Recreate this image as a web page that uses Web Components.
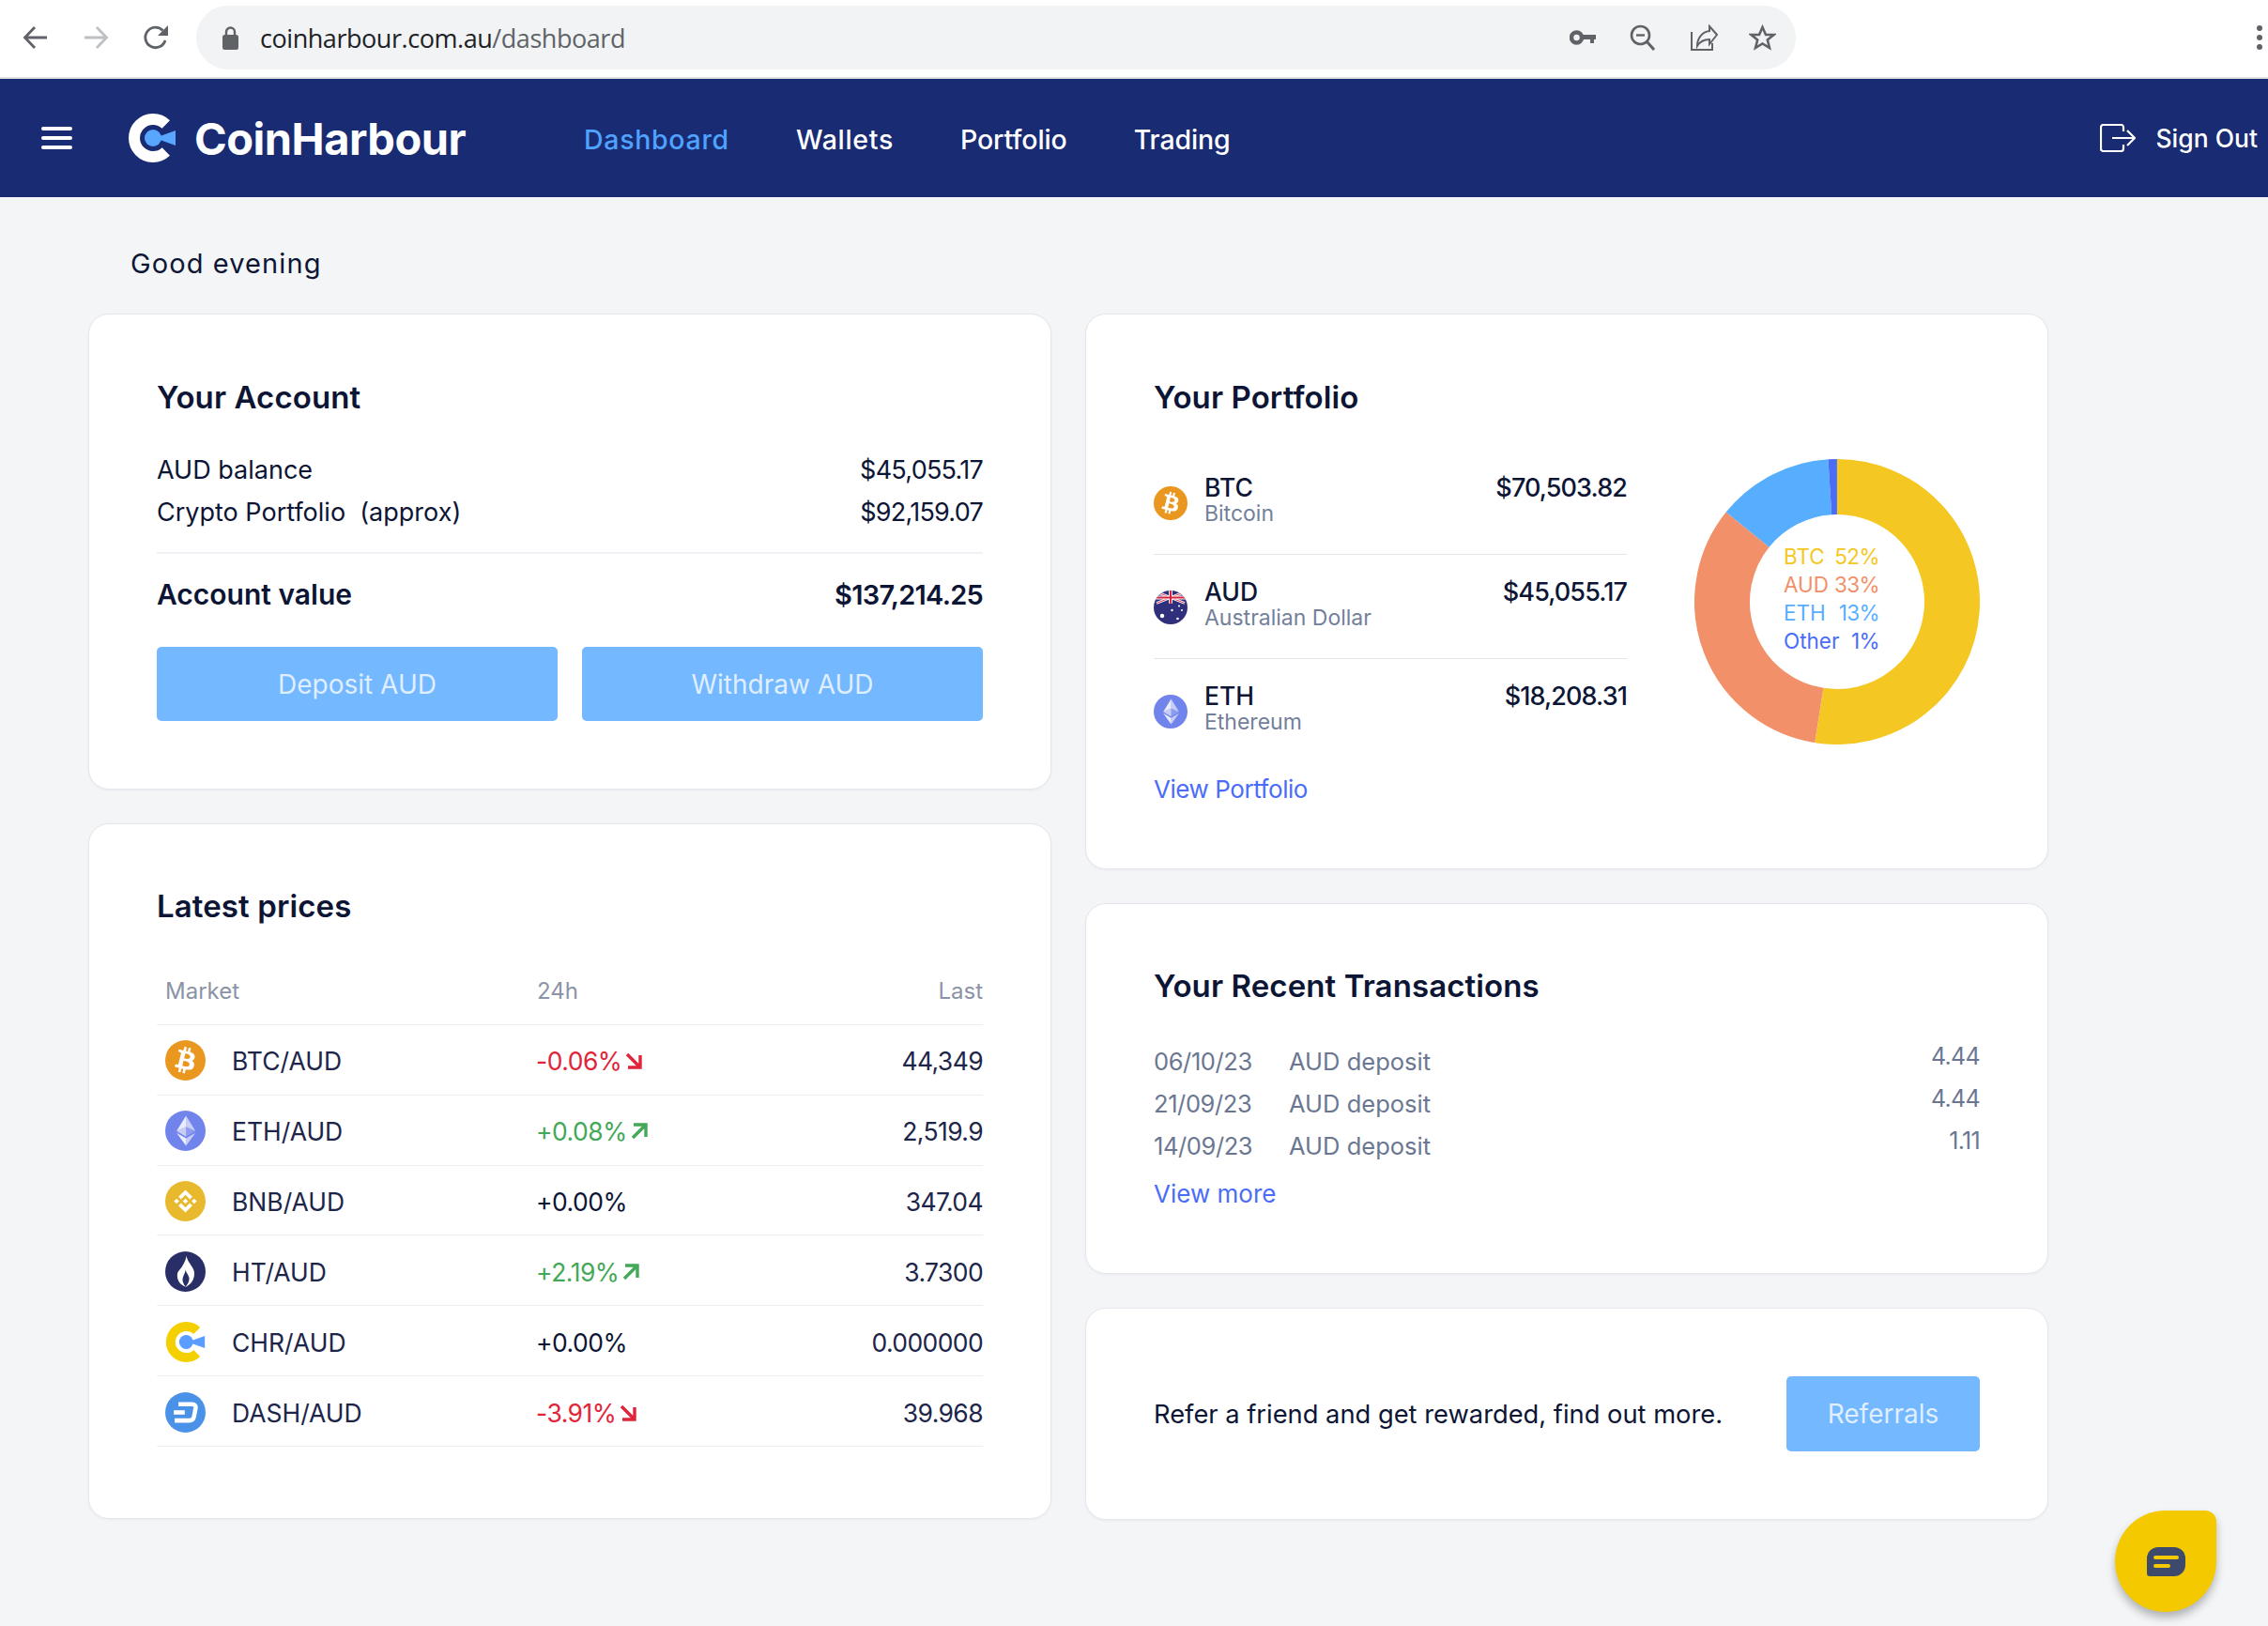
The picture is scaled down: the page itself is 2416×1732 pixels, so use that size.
<!DOCTYPE html>
<html lang="en">
<head>
<meta charset="utf-8">
<title>CoinHarbour dashboard</title>
<style>
   html, body { margin: 0; background: #f4f5f7; }
   body { font-family: Inter, "Noto Sans", sans-serif; color: #0d1535; height: 1732px; overflow: hidden; }
</style>
</head>
<body>
   <browser-bar url-host="coinharbour.com.au" url-path="/dashboard"></browser-bar>
   <site-nav></site-nav>
   <dash-board></dash-board>
   <chat-bubble></chat-bubble>

<script>
// logos shared by the nav and the table
const cMark = (ring, dot) => /*html*/`
   <svg viewBox="0 0 50 52" width="100%" height="100%" aria-hidden="true">
      <path d="M39.800 11.500A20 20 0 1 0 39.800 40.500" fill="none" stroke="${ring}" stroke-width="12"/>
      <circle cx="26" cy="26" r="9" fill="${dot}"/>
      <path d="M28 26 50 18V34Z" fill="${dot}"/>
   </svg>`

const COINS = {
   btc: `<circle cx="12" cy="12" r="12" fill="#e9971f"/>
      <g transform="translate(12 12) scale(1.05) translate(-12 -12)"><path fill="#fff" fill-rule="evenodd" d="M17.288 10.291c.24-1.59-.974-2.45-2.64-3.03l.54-2.153-1.315-.33-.525 2.107c-.345-.087-.705-.167-1.064-.25l.526-2.127-1.32-.33-.54 2.165c-.285-.067-.565-.132-.84-.2l-1.815-.45-.35 1.407s.975.225.955.236c.535.136.63.486.615.766l-1.477 5.92c-.075.166-.24.406-.614.314.015.02-.96-.24-.96-.24l-.66 1.51 1.71.426.93.242-.54 2.19 1.32.327.54-2.17c.36.1.705.19 1.05.273l-.51 2.154 1.32.33.545-2.19c2.24.427 3.93.257 4.64-1.774.57-1.637-.03-2.58-1.217-3.196.854-.193 1.5-.76 1.68-1.93h.01zm-3.01 4.22c-.404 1.64-3.157.75-4.05.53l.72-2.9c.896.23 3.757.67 3.33 2.37zm.41-4.24c-.37 1.49-2.662.735-3.405.55l.654-2.64c.744.18 3.137.52 2.75 2.084v.006z"/></g>`,
   eth: `<g transform="scale(.75)"><circle cx="16" cy="16" r="16" fill="#7184ec"/>
      <g fill="#fff"><path fill-opacity=".6" d="M16.498 4v8.87l7.497 3.35z"/><path fill-opacity=".85" d="M16.498 4 9 16.22l7.498-3.35z"/><path fill-opacity=".6" d="M16.498 21.968v6.027L24 17.616z"/><path fill-opacity=".85" d="M16.498 27.995v-6.028L9 17.616z"/><path fill-opacity=".2" d="m16.498 20.573 7.497-4.353-7.497-3.348z"/><path fill-opacity=".6" d="m9 16.22 7.498 4.353v-7.701z"/></g></g>`,
   bnb: `<g transform="scale(.75)"><circle cx="16" cy="16" r="16" fill="#e8b92c"/>
      <g transform="translate(16 16) scale(.9) translate(-16 -16)"><path fill="#fff" d="M12.116 14.404 16 10.52l3.886 3.886 2.26-2.26L16 6l-6.144 6.144zM6 16l2.26-2.26L10.52 16l-2.26 2.26zm6.116 1.596L16 21.48l3.886-3.886 2.26 2.259L16 26l-6.144-6.144-.003-.003zM21.48 16l2.26-2.26L26 16l-2.26 2.26zm-3.188-.002L16 18.294 13.705 16 16 13.706z"/></g></g>`,
   ht: `<g transform="scale(.75)"><circle cx="16" cy="16" r="16" fill="#2a2e66"/>
      <path fill="#fff" d="M16.800 3.500C17.600 8.500 21.600 11 22.800 15.500 24 21 21 26 16.600 28 12 27 9 22.500 9.600 18 10 15.400 12.400 14 13.600 11.600 14.800 9.300 16.400 6.800 16.800 3.500Z"/>
      <path fill="#2a2e66" d="M16.200 14.500C16.700 17.800 19.400 19 19 22.400 18.700 24.800 17.400 26.800 16.200 28 14.400 25.800 13.300 23.500 13.900 21 14.400 18.800 15.900 17.200 16.200 14.500Z"/></g>`,
   dash: `<g transform="scale(.75)"><circle cx="16" cy="16" r="16" fill="#4a91e8"/>
      <path d="M10.500 9.500H21.500C23.400 9.500 24.400 10.800 24.100 12.600L22.800 19.400C22.400 21.300 21 22.400 19.100 22.400H7.500" fill="none" stroke="#fff" stroke-width="3.400"/>
      <path d="M6.800 16H15.500" fill="none" stroke="#fff" stroke-width="3.400"/></g>`,
   aud: `<defs><clipPath id="disc"><circle cx="12" cy="12" r="12"/></clipPath></defs>
      <g clip-path="url(#disc)"><rect width="24" height="24" fill="#2f2f7c"/>
         <path d="M2 1 22 9M22 1 2 9" stroke="#fff" stroke-width="1.800"/>
         <path d="M2 1 22 9M22 1 2 9" stroke="#d6243c" stroke-width=".6"/>
         <path d="M12 0V9.200M0 5H24" stroke="#fff" stroke-width="2.600"/>
         <path d="M12 0V9.200M0 5H24" stroke="#d6243c" stroke-width="1.300"/>
         <g fill="#fff"><circle cx="6" cy="18" r="1.500"/><circle cx="13" cy="14" r=".8"/><circle cx="18" cy="11" r=".7"/><circle cx="20" cy="14" r=".7"/><circle cx="17" cy="20" r=".9"/></g>
      </g>`
}

class BrowserBar extends HTMLElement {

   constructor() {
      super()
      this.attachShadow({ mode: 'open' })
   }

   getStyles() {
      return /*html*/`
         <style>
            :host{ display:flex; align-items:center; box-sizing:content-box; height:80px; padding-bottom:2px; background:#fff; border-bottom:2px solid #dfe1e0; }
            svg{ display:block; flex:none; }
            .nav{ margin-left:24px; display:flex; gap:36px; width:185px; }
            .pill{ width:1704px; height:68px; background:#f1f3f4; border-radius:34px; display:flex; align-items:center; box-sizing:border-box; padding-left:28px; }
            .url{ margin-left:23px; font:27px "Open Sans", sans-serif; letter-spacing:-.45px; color:#202124; white-space:nowrap; }
            .url span{ color:#5f6368; }
            .tools{ margin-left:auto; margin-right:21px; display:flex; align-items:center; gap:36px; }
            .star{ margin-left:-3px; }
            .dots{ margin-left:auto; margin-right:6px; }
         </style>`
   }

   connectedCallback() {
      const host = this.getAttribute('url-host')
      const path = this.getAttribute('url-path')
      this.shadowRoot.innerHTML = /*html*/`
         ${this.getStyles()}
         <div class="nav">
            <svg width="28" height="28" viewBox="0 0 28 28" fill="none" stroke="#5f6368" stroke-width="2.800"><path d="M26 14H3M13 3 2.500 14 13 25"/></svg>
            <svg width="28" height="28" viewBox="0 0 28 28" fill="none" stroke="#bdc0c4" stroke-width="2.800"><path d="M2 14H25M15 3 25.500 14 15 25"/></svg>
            <svg width="28" height="28" viewBox="0 0 28 28" fill="none"><path d="M24 17A10.800 10.800 0 1 1 21.500 6.500" stroke="#5f6368" stroke-width="2.800"/><path d="M27 1V12H16Z" fill="#5f6368"/></svg>
         </div>
         <div class="pill">
            <svg width="17" height="27" viewBox="0 0 17 27"><path d="M4 12V7a4.500 4.500 0 0 1 9 0V12" fill="none" stroke="#5f6368" stroke-width="2.400"/><rect x="0" y="10" width="17" height="16" rx="2.500" fill="#5f6368"/></svg>
            <div class="url">${host}<span>${path}</span></div>
            <div class="tools">
               <svg width="28" height="18" viewBox="0 0 28 18"><circle cx="7.500" cy="9" r="5.500" fill="none" stroke="#5f6368" stroke-width="4.500"/><path d="M13 6H28V11H26V15H22V11H13Z" fill="#5f6368"/></svg>
               <svg width="28" height="28" viewBox="0 0 28 28" fill="none" stroke="#5f6368"><circle cx="11.500" cy="11.500" r="9.500" stroke-width="2.600"/><path d="M7 11.500H16" stroke-width="2.400"/><path d="M18.500 18.500 26 27" stroke-width="3"/></svg>
               <svg width="30" height="28" viewBox="0 0 30 28" fill="none" stroke="#5f6368" stroke-width="2"><path d="M2 8V27H24V20"/><path d="M21 2 29 11 21 21V16C15 16 11 18 8 23 8 15 13 8 21 7Z"/></svg>
               <svg class="star" width="29" height="28" viewBox="0 0 29 28" fill="none" stroke="#5f6368" stroke-width="2.600"><path d="M14.500 3 18 11H26.500L19.800 16.500 22 25 14.500 20.500 7 25 9.200 16.500 2.500 11H11Z"/></svg>
            </div>
         </div>
         <svg class="dots" width="6" height="28" viewBox="0 0 6 28" fill="#5f6368"><circle cx="3" cy="4" r="3"/><circle cx="3" cy="14" r="3"/><circle cx="3" cy="24" r="3"/></svg>
      `
   }
}

class SiteNav extends HTMLElement {

   constructor() {
      super()
      this.attachShadow({ mode: 'open' })
   }

   connectedCallback() {
      this.shadowRoot.innerHTML = /*html*/`
         <style>
            :host{ display:flex; align-items:center; height:126px; background:#182b73; color:#fff; }
            .burger{ margin-left:44px; width:33px; display:flex; flex-direction:column; gap:6px; }
            .burger i{ display:block; height:4px; border-radius:2px; background:#fff; }
            .logo{ margin-left:60px; display:flex; align-items:center; width:360px; }
            .mark{ width:50px; height:52px; flex:none; }
            .word{ margin-left:20px; font:700 47px Inter, sans-serif; letter-spacing:-.5px; white-space:nowrap; }
            .links{ margin-left:125px; padding-top:3px; display:flex; font:500 28.500px Inter, sans-serif; letter-spacing:.7px; }
            .links a{ color:#fff; text-decoration:none; margin-right:71px; white-space:nowrap; }
            .links a.on{ color:#4fa3ff; }
            .links a.tight{ letter-spacing:-.1px; }
            .out{ margin-left:auto; margin-right:11px; display:flex; align-items:center; gap:22px; font:500 26.500px Inter, sans-serif; }
         </style>
         <div class="burger"><i></i><i></i><i></i></div>
         <div class="logo"><div class="mark">${cMark('#fff', '#58a6ff')}</div><div class="word">CoinHarbour</div></div>
         <div class="links"><a class="on" href="#">Dashboard</a><a href="#">Wallets</a><a class="tight" href="#">Portfolio</a><a class="tight" href="#">Trading</a></div>
         <div class="out">
            <svg width="38" height="30" viewBox="0 0 38 30" fill="none" stroke="#fff" stroke-width="2.200"><path d="M25 8V3.500A2.500 2.500 0 0 0 22.500 1H3.500A2.500 2.500 0 0 0 1 3.500V26.500A2.500 2.500 0 0 0 3.500 29H22.500A2.500 2.500 0 0 0 25 26.500V22"/><path d="M13 15H36M29 7 37 15 29 23"/></svg>
            <span>Sign Out</span>
         </div>
      `
   }
}

class CoinIcon extends HTMLElement {

   constructor() {
      super()
      this.attachShadow({ mode: 'open' })
   }

   connectedCallback() {
      const name = this.getAttribute('name')
      const inner = name === 'chr'
         ? cMark('#f5d000', '#5a9cff')
         : `<svg viewBox="0 0 24 24" width="100%" height="100%" aria-hidden="true">${COINS[name]}</svg>`
      this.shadowRoot.innerHTML = /*html*/`
         <style>
            :host{ display:block; flex:none; width:var(--coin-size,36px); height:var(--coin-size,36px); }
            svg{ display:block; }
         </style>
         ${inner}`
   }
}

class DashCard extends HTMLElement {

   constructor() {
      super()
      this.attachShadow({ mode: 'open' })
   }

   connectedCallback() {
      const title = this.getAttribute('heading')
      this.shadowRoot.innerHTML = /*html*/`
         <style>
            :host{ display:block; box-sizing:border-box; background:#fff; border-radius:22px; border:1px solid #e6e7ec; box-shadow:0 1px 3px rgba(20,30,70,.05); padding:72px 72px 0; }
            h2{ margin:0; font:600 33px/32px Inter, sans-serif; color:#0d1535; letter-spacing:.1px; }
         </style>
         ${title ? `<h2>${title}</h2>` : ''}
         <slot></slot>`
   }
}

class KeyRow extends HTMLElement {

   constructor() {
      super()
      this.attachShadow({ mode: 'open' })
   }

   connectedCallback() {
      this.shadowRoot.innerHTML = /*html*/`
         <style>
            :host{ display:flex; justify-content:space-between; align-items:center; height:45px; font-size:27px; white-space:pre; }
            .val{ letter-spacing:-.75px; }
            :host([strong]){ height:46px; font-weight:600; font-size:30px; }
            :host([strong]) .val{ font-size:29px; letter-spacing:-.75px; }
         </style>
         <span><slot name="label"></slot></span><span class="val"><slot name="value"></slot></span>`
   }
}

class FlatButton extends HTMLElement {

   constructor() {
      super()
      this.attachShadow({ mode: 'open' })
   }

   connectedCallback() {
      this.shadowRoot.innerHTML = /*html*/`
         <style>
            :host{ display:flex; align-items:center; justify-content:center; height:79px; background:#74b8ff; border-radius:5px; color:rgba(255,255,255,.78); font-size:28px; font-weight:400; }
         </style>
         <slot></slot>`
   }
}

class HoldingRow extends HTMLElement {

   constructor() {
      super()
      this.attachShadow({ mode: 'open' })
   }

   connectedCallback() {
      this.shadowRoot.innerHTML = /*html*/`
         <style>
            :host{ display:grid; grid-template-columns:36px 1fr auto; column-gap:18px; height:110px; border-bottom:1px solid #e3e4e8; }
            :host([last]){ border-bottom:0; }
            coin-icon{ margin-top:38px; }
            .txt{ padding-top:24px; }
            .sym{ font:500 26.500px/30px Inter, sans-serif; }
            .sub{ font:400 23px/27px Inter, sans-serif; color:#737f9a; }
            .amt{ padding-top:25px; font:500 27px/30px Inter, sans-serif; letter-spacing:-.9px; }
         </style>
         <coin-icon name="${this.getAttribute('coin')}"></coin-icon>
         <div class="txt"><div class="sym"><slot name="sym"></slot></div><div class="sub"><slot name="sub"></slot></div></div>
         <div class="amt"><slot name="amt"></slot></div>`
   }
}

class DonutChart extends HTMLElement {

   constructor() {
      super()
      this.attachShadow({ mode: 'open' })
   }

   arc(from, to, color) {
      const r = 122.500, c = 152
      const pt = f => {
         const a = f * 2 * Math.PI
         return (c + r * Math.sin(a)).toFixed(2) + ' ' + (c - r * Math.cos(a)).toFixed(2)
      }
      const big = to - from > .5 ? 1 : 0
      return `<path d="M${pt(from)}A${r} ${r} 0 ${big} 1 ${pt(to)}" fill="none" stroke="${color}" stroke-width="59"/>`
   }

   connectedCallback() {
      this.shadowRoot.innerHTML = /*html*/`
         <style>
            :host{ display:block; position:relative; width:304px; height:304px; flex:none; }
            svg{ display:block; }
            .legend{ position:absolute; left:95px; top:88px; width:102px; font-size:22.500px; white-space:nowrap; }
            .legend div{ display:flex; justify-content:space-between; align-items:center; height:30px; }
            .legend b{ font-weight:400; letter-spacing:-.6px; }
            .btc{ color:#f4c722; } .aud{ color:#f19069; } .eth{ color:#57aefe; } .oth{ color:#4a6cf7; }
         </style>
         <svg width="304" height="304" viewBox="0 0 304 304">
            ${this.arc(0, .525, '#f4c722')}${this.arc(.525, .858, '#f19069')}${this.arc(.858, .99, '#57aefe')}${this.arc(.99, .9999, '#4a6cf7')}
         </svg>
         <div class="legend">
            <div class="btc"><span>BTC</span><b>52%</b></div>
            <div class="aud"><span>AUD</span><b>33%</b></div>
            <div class="eth"><span>ETH</span><b>13%</b></div>
            <div class="oth"><span>Other</span><b>1%</b></div>
         </div>`
   }
}

class PriceRow extends HTMLElement {

   constructor() {
      super()
      this.attachShadow({ mode: 'open' })
   }

   connectedCallback() {
      const trend = this.getAttribute('trend')
      const color = trend === 'up' ? '#43a857' : trend === 'down' ? '#e0243a' : '#0d1535'
      const arrow = trend === 'up'
         ? `<svg width="18" height="18" viewBox="0 0 18 18" fill="none" stroke="${color}" stroke-width="3.400"><path d="M2 16 16 2M3 2H16V15"/></svg>`
         : trend === 'down'
         ? `<svg width="18" height="18" viewBox="0 0 18 18" fill="none" stroke="${color}" stroke-width="3.400"><path d="M2 2 16 16M3 16H16V3"/></svg>`
         : ''
      this.shadowRoot.innerHTML = /*html*/`
         <style>
            :host{ display:grid; grid-template-columns:404px 1fr auto; align-items:center; height:73.830px; border-bottom:1px solid #eeeff4; font-size:26.500px; --coin-size:43px; }
            .mkt{ display:flex; align-items:center; gap:28px; padding-left:9px; color:#1d2549; }
            .lbl{ padding-top:3px; }
            coin-icon{ margin-top:2px; }
            .chg{ display:flex; align-items:center; gap:4px; color:${color}; letter-spacing:-.5px; padding-top:3px; }
            .last{ color:#1d2549; letter-spacing:-.6px; padding-top:3px; }
         </style>
         <div class="mkt"><coin-icon name="${this.getAttribute('coin')}"></coin-icon><span class="lbl"><slot name="pair"></slot></span></div>
         <div class="chg"><slot name="chg"></slot>${arrow}</div>
         <div class="last"><slot name="last"></slot></div>`
   }
}

class TxRow extends HTMLElement {

   constructor() {
      super()
      this.attachShadow({ mode: 'open' })
   }

   connectedCallback() {
      this.shadowRoot.innerHTML = /*html*/`
         <style>
            :host{ display:grid; grid-template-columns:144px 1fr auto; align-items:center; height:45px; font-size:25.500px; color:#6b7791; white-space:pre; }
            .date{ letter-spacing:-.4px; }
            .amt{ font-size:25px; letter-spacing:-.7px; position:relative; top:-6px; }
         </style>
         <span class="date"><slot name="date"></slot></span><span><slot name="what"></slot></span><span class="amt"><slot name="amt"></slot></span>`
   }
}

class ChatBubble extends HTMLElement {

   constructor() {
      super()
      this.attachShadow({ mode: 'open' })
   }

   connectedCallback() {
      this.shadowRoot.innerHTML = /*html*/`
         <style>
            :host{ position:fixed; left:2253px; top:1609px; width:108px; height:108px; background:#f5c900; border-radius:54px 12px 54px 54px; box-shadow:0 6px 10px rgba(0,0,0,.28); display:flex; align-items:center; justify-content:center; }
         </style>
         <svg width="41" height="31" viewBox="0 0 41 31"><path d="M12 0H29A12 12 0 0 1 41 12V19A12 12 0 0 1 29 31H3A3 3 0 0 1 0 28V12A12 12 0 0 1 12 0Z" fill="#3e4a6b"/><path d="M9 11H32M9 20H23" stroke="#f5c900" stroke-width="4" stroke-linecap="round"/></svg>`
   }
}

class DashBoard extends HTMLElement {

   constructor() {
      super()
      this.attachShadow({ mode: 'open' })
   }

   getStyles() {
      return /*html*/`
         <style>
            :host{ display:block; padding-left:94px; color:#0d1535; }
            .hello{ padding-left:45px; height:124px; line-height:142px; font-size:29px; letter-spacing:1.1px; box-sizing:border-box; }
            .cols{ display:grid; grid-template-columns:1026px 1026px; column-gap:36px; align-items:start; }
            .col{ display:flex; flex-direction:column; gap:36px; }
            hr{ border:0; border-top:2px solid #f0f1f6; margin:0; }
            a{ color:#4a6cf7; text-decoration:none; font-size:26px; line-height:32px; display:block; }
            .account{ height:507px; }
            .rows{ margin-top:39px; }
            .btns{ display:grid; grid-template-columns:427px 427px; column-gap:26px; margin-top:33px; }
            .portfolio{ height:592px; }
            .split{ display:flex; justify-content:space-between; margin-top:41px; }
            .hold{ width:504px; }
            donut-chart{ margin-top:9px; }
            .latest{ height:741px; padding-top:71px; }
            .head{ display:grid; grid-template-columns:405px 1fr auto; align-items:center; height:72px; margin-top:38px; border-bottom:1px solid #eeeff4; font-size:24px; color:#8c93a6; }
            .head span:first-child{ padding-left:9px; }
            .tx{ height:395px; padding-top:71px; }
            .txrows{ margin-top:42px; }
            .refer{ height:226px; display:flex; align-items:center; justify-content:space-between; padding-top:0; padding-bottom:0; font-size:27.300px; }
            .refer flat-button{ width:206px; height:80px; }
            .vp{ letter-spacing:-.45px; margin-top:13px; }
            .vm{ margin-top:13px; }
         </style>`
   }

   connectedCallback() {
      this.shadowRoot.innerHTML = /*html*/`
         ${this.getStyles()}
         <div class="hello">Good evening</div>
         <div class="cols">
            <div class="col">
               <dash-card class="account" heading="Your Account">
                  <div class="rows">
                     <key-row><span slot="label">AUD balance</span><span slot="value">$45,055.17</span></key-row>
                     <key-row><span slot="label">Crypto Portfolio  (approx)</span><span slot="value">$92,159.07</span></key-row>
                  </div>
                  <hr style="margin-top:20px">
                  <key-row strong style="margin-top:20px"><span slot="label">Account value</span><span slot="value">$137,214.25</span></key-row>
                  <div class="btns"><flat-button>Deposit AUD</flat-button><flat-button>Withdraw AUD</flat-button></div>
               </dash-card>
               <dash-card class="latest" heading="Latest prices">
                  <div class="head"><span>Market</span><span>24h</span><span>Last</span></div>
                  <price-row coin="btc" trend="down"><span slot="pair">BTC/AUD</span><span slot="chg">-0.06%</span><span slot="last">44,349</span></price-row>
                  <price-row coin="eth" trend="up"><span slot="pair">ETH/AUD</span><span slot="chg">+0.08%</span><span slot="last">2,519.9</span></price-row>
                  <price-row coin="bnb"><span slot="pair">BNB/AUD</span><span slot="chg">+0.00%</span><span slot="last">347.04</span></price-row>
                  <price-row coin="ht" trend="up"><span slot="pair">HT/AUD</span><span slot="chg">+2.19%</span><span slot="last">3.7300</span></price-row>
                  <price-row coin="chr"><span slot="pair">CHR/AUD</span><span slot="chg">+0.00%</span><span slot="last">0.000000</span></price-row>
                  <price-row coin="dash" trend="down"><span slot="pair">DASH/AUD</span><span slot="chg">-3.91%</span><span slot="last">39.968</span></price-row>
               </dash-card>
            </div>
            <div class="col">
               <dash-card class="portfolio" heading="Your Portfolio">
                  <div class="split">
                     <div class="hold">
                        <holding-row coin="btc"><span slot="sym">BTC</span><span slot="sub">Bitcoin</span><span slot="amt">$70,503.82</span></holding-row>
                        <holding-row coin="aud"><span slot="sym">AUD</span><span slot="sub">Australian Dollar</span><span slot="amt">$45,055.17</span></holding-row>
                        <holding-row coin="eth" last><span slot="sym">ETH</span><span slot="sub">Ethereum</span><span slot="amt">$18,208.31</span></holding-row>
                        <a href="#" class="vp">View Portfolio</a>
                     </div>
                     <donut-chart></donut-chart>
                  </div>
               </dash-card>
               <dash-card class="tx" heading="Your Recent Transactions">
                  <div class="txrows">
                     <tx-row><span slot="date">06/10/23</span><span slot="what">AUD deposit</span><span slot="amt">4.44</span></tx-row>
                     <tx-row><span slot="date">21/09/23</span><span slot="what">AUD deposit</span><span slot="amt">4.44</span></tx-row>
                     <tx-row><span slot="date">14/09/23</span><span slot="what">AUD deposit</span><span slot="amt">1.11</span></tx-row>
                  </div>
                  <a href="#" class="vm">View more</a>
               </dash-card>
               <dash-card class="refer">
                  <span>Refer a friend and get rewarded, find out more.</span>
                  <flat-button>Referrals</flat-button>
               </dash-card>
            </div>
         </div>`
   }
}

customElements.define('browser-bar', BrowserBar)
customElements.define('site-nav', SiteNav)
customElements.define('coin-icon', CoinIcon)
customElements.define('dash-card', DashCard)
customElements.define('key-row', KeyRow)
customElements.define('flat-button', FlatButton)
customElements.define('holding-row', HoldingRow)
customElements.define('donut-chart', DonutChart)
customElements.define('price-row', PriceRow)
customElements.define('tx-row', TxRow)
customElements.define('chat-bubble', ChatBubble)
customElements.define('dash-board', DashBoard)
</script>
</body>
</html>
